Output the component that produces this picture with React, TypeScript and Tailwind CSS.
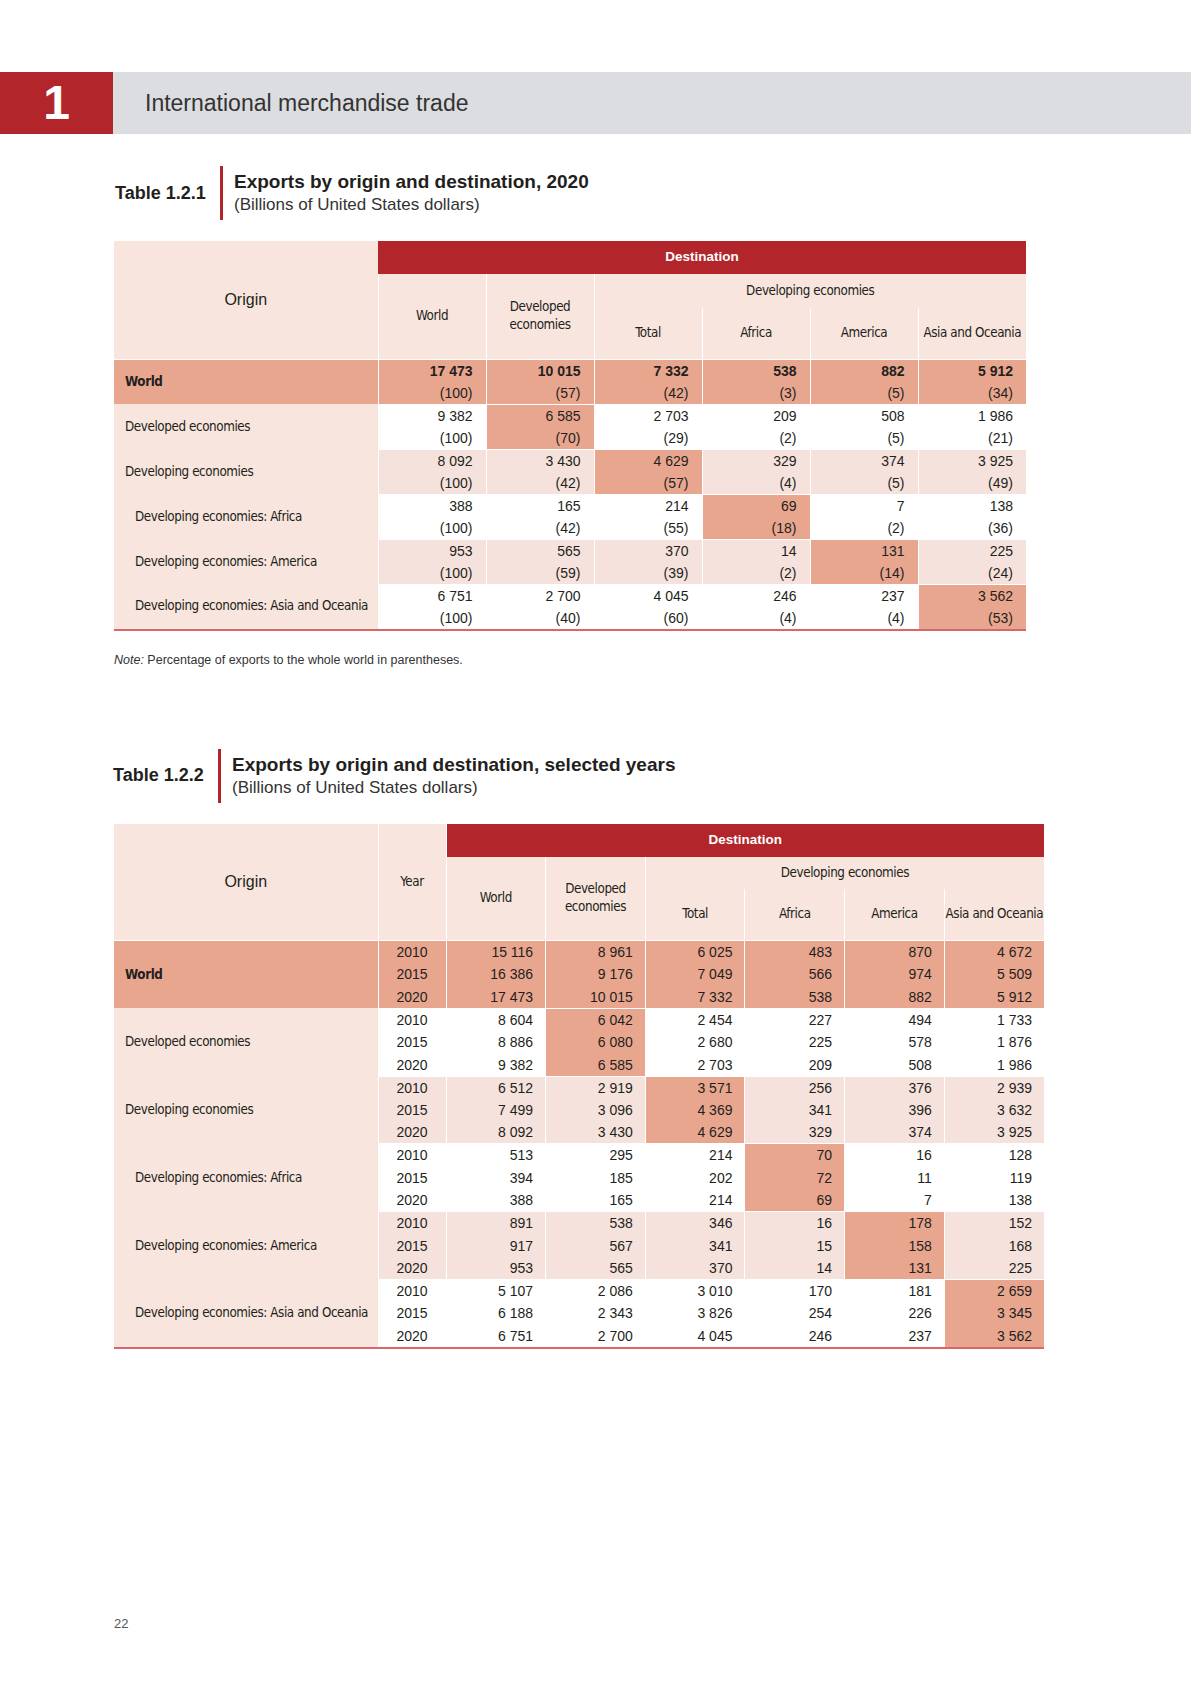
import React from 'react';

const RED = 'bg-[#b1252b]';

const t1 = [
  { name: 'World', bold: true, indent: false, rows: [['17 473', '(100)'], ['10 015', '(57)'], ['7 332', '(42)'], ['538', '(3)'], ['882', '(5)'], ['5 912', '(34)']] },
  { name: 'Developed economies', indent: false, rows: [['9 382', '(100)'], ['6 585', '(70)'], ['2 703', '(29)'], ['209', '(2)'], ['508', '(5)'], ['1 986', '(21)']] },
  { name: 'Developing economies', indent: false, rows: [['8 092', '(100)'], ['3 430', '(42)'], ['4 629', '(57)'], ['329', '(4)'], ['374', '(5)'], ['3 925', '(49)']] },
  { name: 'Developing economies: Africa', indent: true, rows: [['388', '(100)'], ['165', '(42)'], ['214', '(55)'], ['69', '(18)'], ['7', '(2)'], ['138', '(36)']] },
  { name: 'Developing economies: America', indent: true, rows: [['953', '(100)'], ['565', '(59)'], ['370', '(39)'], ['14', '(2)'], ['131', '(14)'], ['225', '(24)']] },
  { name: 'Developing economies: Asia and Oceania', indent: true, rows: [['6 751', '(100)'], ['2 700', '(40)'], ['4 045', '(60)'], ['246', '(4)'], ['237', '(4)'], ['3 562', '(53)']] },
];

const t2 = [
  { name: 'World', bold: true, indent: false, years: [
    ['15 116', '8 961', '6 025', '483', '870', '4 672'],
    ['16 386', '9 176', '7 049', '566', '974', '5 509'],
    ['17 473', '10 015', '7 332', '538', '882', '5 912'],
  ] },
  { name: 'Developed economies', indent: false, years: [
    ['8 604', '6 042', '2 454', '227', '494', '1 733'],
    ['8 886', '6 080', '2 680', '225', '578', '1 876'],
    ['9 382', '6 585', '2 703', '209', '508', '1 986'],
  ] },
  { name: 'Developing economies', indent: false, years: [
    ['6 512', '2 919', '3 571', '256', '376', '2 939'],
    ['7 499', '3 096', '4 369', '341', '396', '3 632'],
    ['8 092', '3 430', '4 629', '329', '374', '3 925'],
  ] },
  { name: 'Developing economies: Africa', indent: true, years: [
    ['513', '295', '214', '70', '16', '128'],
    ['394', '185', '202', '72', '11', '119'],
    ['388', '165', '214', '69', '7', '138'],
  ] },
  { name: 'Developing economies: America', indent: true, years: [
    ['891', '538', '346', '16', '178', '152'],
    ['917', '567', '341', '15', '158', '168'],
    ['953', '565', '370', '14', '131', '225'],
  ] },
  { name: 'Developing economies: Asia and Oceania', indent: true, years: [
    ['5 107', '2 086', '3 010', '170', '181', '2 659'],
    ['6 188', '2 343', '3 826', '254', '226', '3 345'],
    ['6 751', '2 700', '4 045', '246', '237', '3 562'],
  ] },
];

const YEARS = ['2010', '2015', '2020'];

// background for a data cell: world row salmon, diagonal salmon, odd groups light pink
function cellBg(group: number, col: number) {
  if (group === 0 || group === col) return 'bg-[#e9a68f]';
  if (group === 2 || group === 4) return 'bg-[#f6e2dc]';
  return 'bg-white';
}

const narrow = "font-['Liberation_Sans_Narrow','DejaVu_Sans_Condensed','Liberation_Sans',sans-serif] text-[13.3px] tracking-[-0.4px] whitespace-nowrap";

function Caption({ label, title }: { label: string; title: string }) {
  return (
    <div className="flex items-center h-[54px]">
      <div className="w-[105px] text-[18px] font-bold text-[#231f20]">{label}</div>
      <div className={`w-[3px] h-[54px] ${RED}`} />
      <div className="ml-[11px] text-[#231f20]">
        <div className="text-[19px] font-bold leading-[24px]">{title}</div>
        <div className="text-[17px] leading-[22px] text-[#333]">(Billions of United States dollars)</div>
      </div>
    </div>
  );
}

function Table1() {
  return (
    <table className="table-fixed border-collapse w-[912px] text-[#231f20] border-b-2 border-[#d8676c]">
      <colgroup>
        <col className="w-[264px]" />
        {[0, 1, 2, 3, 4, 5].map(i => <col key={i} className="w-[108px]" />)}
      </colgroup>
      <thead>
        <tr className="h-[33px]">
          <th rowSpan={3} className="bg-[#f8e5dd] text-[16px] font-normal">Origin</th>
          <th colSpan={6} className={`${RED} text-white text-[13.5px] font-bold`}>Destination</th>
        </tr>
        <tr className="h-[34px]">
          <th rowSpan={2} className={`bg-[#f8e5dd] border-l border-white font-normal ${narrow}`}>World</th>
          <th rowSpan={2} className={`bg-[#f8e5dd] border-l border-white font-normal leading-[18px] ${narrow}`}>Developed<br />economies</th>
          <th colSpan={4} className={`bg-[#f8e5dd] border-l border-white font-normal ${narrow}`}>Developing economies</th>
        </tr>
        <tr className="h-[51px]">
          {['Total', 'Africa', 'America', 'Asia and Oceania'].map(h => (
            <th key={h} className={`bg-[#f8e5dd] border-l border-white font-normal ${narrow}`}>{h}</th>
          ))}
        </tr>
      </thead>
      <tbody>
        {t1.map((g, gi) => (
          <tr key={g.name} className="h-[45px]">
            <td className={`${gi === 0 ? 'bg-[#e9a68f] font-bold border-t border-white' : 'bg-[#f8e5dd]'} ${narrow} ${g.indent ? 'pl-[21px]' : 'pl-[11px]'}`}>
              {g.name}
            </td>
            {g.rows.map((v, ci) => (
              <td key={ci} className={`${cellBg(gi, ci)} border-l border-t border-white p-0 pr-[13px] text-right text-[14px]`}>
                <div className={`leading-[22px] ${gi === 0 ? 'font-bold' : ''}`}>{v[0]}</div>
                <div className="leading-[22px]">{v[1]}</div>
              </td>
            ))}
          </tr>
        ))}
      </tbody>
    </table>
  );
}

function Table2() {
  return (
    <table className="table-fixed border-collapse w-[930px] text-[#231f20] border-b-2 border-[#d8676c]">
      <colgroup>
        <col className="w-[264px]" />
        <col className="w-[68px]" />
        {[0, 1, 2, 3, 4, 5].map(i => <col key={i} className="w-[99.67px]" />)}
      </colgroup>
      <thead>
        <tr className="h-[33px]">
          <th rowSpan={3} className="bg-[#f8e5dd] text-[16px] font-normal">Origin</th>
          <th rowSpan={3} className={`bg-[#f8e5dd] border-l border-white font-normal ${narrow}`}>Year</th>
          <th colSpan={6} className={`${RED} text-white text-[13.5px] font-bold border-l border-white`}>Destination</th>
        </tr>
        <tr className="h-[32px]">
          <th rowSpan={2} className={`bg-[#f8e5dd] border-l border-white font-normal ${narrow}`}>World</th>
          <th rowSpan={2} className={`bg-[#f8e5dd] border-l border-white font-normal leading-[18px] ${narrow}`}>Developed<br />economies</th>
          <th colSpan={4} className={`bg-[#f8e5dd] border-l border-white font-normal ${narrow}`}>Developing economies</th>
        </tr>
        <tr className="h-[52px]">
          {['Total', 'Africa', 'America', 'Asia and Oceania'].map(h => (
            <th key={h} className={`bg-[#f8e5dd] border-l border-white font-normal ${narrow}`}>{h}</th>
          ))}
        </tr>
      </thead>
      <tbody>
        {t2.map((g, gi) =>
          g.years.map((row, yi) => (
            <tr key={g.name + yi} className="h-[22.6px]">
              {yi === 0 && (
                <td rowSpan={3} className={`${gi === 0 ? 'bg-[#e9a68f] font-bold border-t border-white' : 'bg-[#f8e5dd]'} ${narrow} ${g.indent ? 'pl-[21px]' : 'pl-[11px]'}`}>
                  {g.name}
                </td>
              )}
              <td className={`${gi === 0 ? 'bg-[#e9a68f]' : gi === 2 || gi === 4 ? 'bg-[#f6e2dc]' : 'bg-white'} border-l border-white ${yi === 0 ? 'border-t' : ''} p-0 text-center text-[14px] leading-[22px]`}>
                {YEARS[yi]}
              </td>
              {row.map((v, ci) => (
                <td key={ci} className={`${cellBg(gi, ci)} border-l border-white ${yi === 0 ? 'border-t' : ''} p-0 pr-[12px] text-right text-[14px] leading-[22px]`}>
                  {v}
                </td>
              ))}
            </tr>
          ))
        )}
      </tbody>
    </table>
  );
}

export default function App() {
  return (
    <div className="w-[1191px] min-h-[1684px] bg-white font-['Liberation_Sans',Arial,sans-serif] text-[#231f20]">
      <div className="pt-[72px]">
        <div className="flex h-[62px]">
          <div className={`w-[113px] ${RED} flex items-center justify-center text-white text-[48px] font-bold`}>1</div>
          <div className="flex-1 bg-[#dcdde0] flex items-center pl-[32px] text-[23px] text-[#333]">International merchandise trade</div>
        </div>
      </div>

      <div className="pl-[115px] mt-[32px]">
        <Caption label="Table 1.2.1" title="Exports by origin and destination, 2020" />
      </div>

      <div className="ml-[114px] mt-[21px]">
        <Table1 />
      </div>

      <div className="ml-[114px] mt-[21px] text-[12.5px] leading-[16px] text-[#333]">
        <i>Note:</i> Percentage of exports to the whole world in parentheses.
      </div>

      <div className="pl-[113px] mt-[81px]">
        <Caption label="Table 1.2.2" title="Exports by origin and destination, selected years" />
      </div>

      <div className="ml-[114px] mt-[21px]">
        <Table2 />
      </div>

      <div className="ml-[114px] mt-[265px] text-[13px] text-[#555]">22</div>
    </div>
  );
}
